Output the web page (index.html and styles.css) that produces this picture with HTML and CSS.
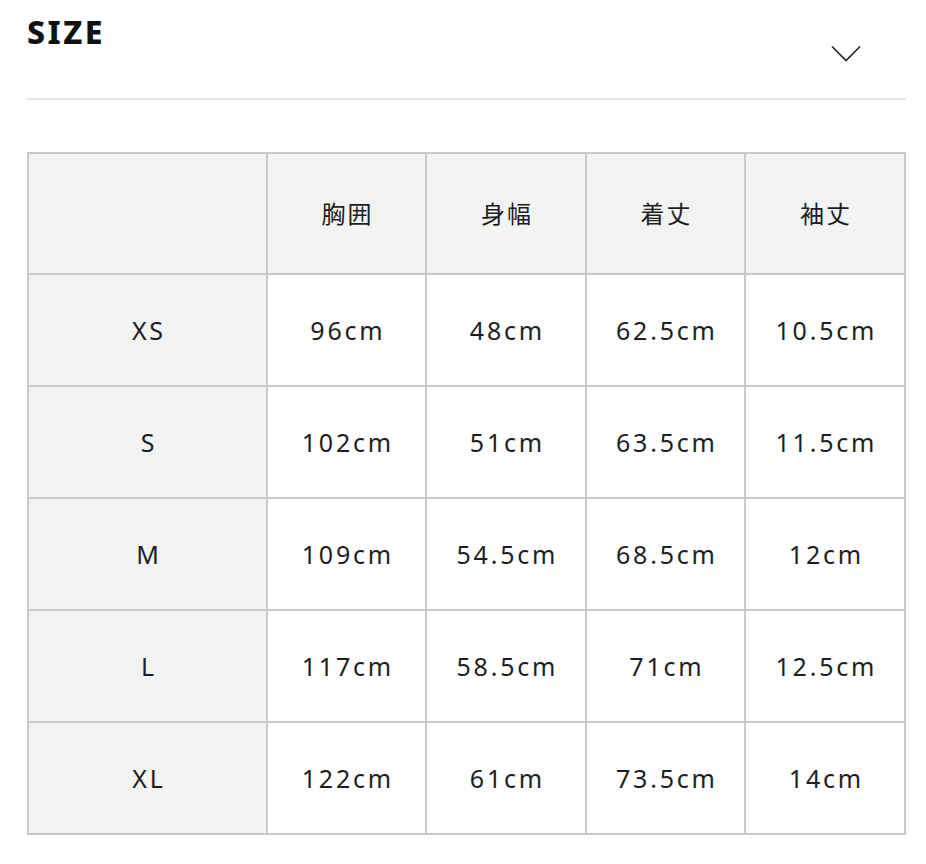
FILE: index.html
```html
<!DOCTYPE html>
<html lang="ja">
<head>
<meta charset="utf-8">
<title>SIZE</title>
<link rel="stylesheet" href="styles.css">
</head>
<body>
<div class="page">
  <div class="section-head">
    <h2 class="title">SIZE</h2>
    <svg class="chevron" width="30" height="17" viewBox="0 0 30 17" aria-hidden="true">
      <polyline points="1,1.5 15,15.5 29,1.5" fill="none" stroke="#222" stroke-width="1.6"/>
    </svg>
  </div>
  <div class="size-table">
    <div class="cell head"></div>
    <div class="cell head">胸囲</div>
    <div class="cell head">身幅</div>
    <div class="cell head">着丈</div>
    <div class="cell head">袖丈</div>

    <div class="cell label">XS</div>
    <div class="cell">96cm</div>
    <div class="cell">48cm</div>
    <div class="cell">62.5cm</div>
    <div class="cell">10.5cm</div>

    <div class="cell label">S</div>
    <div class="cell">102cm</div>
    <div class="cell">51cm</div>
    <div class="cell">63.5cm</div>
    <div class="cell">11.5cm</div>

    <div class="cell label">M</div>
    <div class="cell">109cm</div>
    <div class="cell">54.5cm</div>
    <div class="cell">68.5cm</div>
    <div class="cell">12cm</div>

    <div class="cell label">L</div>
    <div class="cell">117cm</div>
    <div class="cell">58.5cm</div>
    <div class="cell">71cm</div>
    <div class="cell">12.5cm</div>

    <div class="cell label">XL</div>
    <div class="cell">122cm</div>
    <div class="cell">61cm</div>
    <div class="cell">73.5cm</div>
    <div class="cell">14cm</div>
  </div>
</div>
</body>
</html>
```
FILE: styles.css
```css
* { box-sizing: border-box; }
html, body { margin: 0; padding: 0; background: #fff; }
body {
  font-family: "Noto Sans", "Noto Sans CJK JP", sans-serif;
  color: #222;
}
.page {
  padding: 0 20px 0 27px;
}
.section-head {
  display: flex;
  justify-content: space-between;
  align-items: flex-start;
  height: 100px;
  border-bottom: 2px solid #e2e2e2;
}
.title {
  margin: 10px 0 0 0;
  font-size: 32px;
  font-weight: 800;
  letter-spacing: 2.5px;
  line-height: normal;
  color: #111;
}
.chevron {
  display: block;
  margin-top: 45px;
  margin-right: 45px;
}
.size-table {
  margin-top: 52px;
  display: grid;
  grid-template-columns: 237px 157px 158px 157px 158px;
  grid-template-rows: 119px repeat(5, 110px);
  gap: 2px;
  padding: 2px;
  background: #c9c9c9;
  width: 879px;
}
.cell {
  display: flex;
  align-items: center;
  justify-content: center;
  background: #fff;
  font-size: 25px;
  letter-spacing: 2.8px;
  padding-left: 2.8px;
  color: #1e1e1e;
}
.cell.head {
  font-size: 24px;
  letter-spacing: 2px;
  padding-left: 2px;
  padding-bottom: 2px;
}
.cell.head, .cell.label {
  background: #f3f3f3;
}
```
